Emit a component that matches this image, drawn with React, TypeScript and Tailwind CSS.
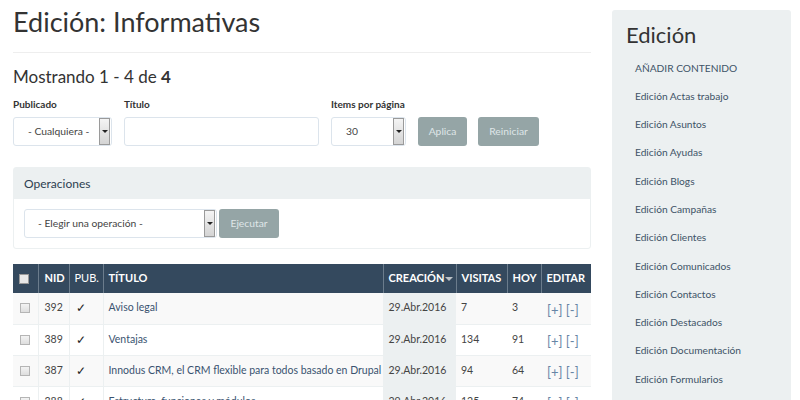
import React from "react";

const rows = [
  { nid: "392", title: "Aviso legal", date: "29.Abr.2016", visits: "7", today: "3" },
  { nid: "389", title: "Ventajas", date: "29.Abr.2016", visits: "134", today: "91" },
  { nid: "387", title: "Innodus CRM, el CRM flexible para todos basado en Drupal", date: "29.Abr.2016", visits: "94", today: "64" },
  { nid: "388", title: "Estructura, funciones y módulos", date: "29.Abr.2016", visits: "125", today: "74" },
];

const links = [
  "AÑADIR CONTENIDO",
  "Edición Actas trabajo",
  "Edición Asuntos",
  "Edición Ayudas",
  "Edición Blogs",
  "Edición Campañas",
  "Edición Clientes",
  "Edición Comunicados",
  "Edición Contactos",
  "Edición Destacados",
  "Edición Documentación",
  "Edición Formularios",
  "Edición Informativas",
];

function Arrow() {
  return (
    <span className="mr-px flex h-[27px] w-[11px] items-center justify-center border border-[#9a9a9a] bg-gradient-to-b from-[#f4f4f4] to-[#d4d4d4]">
      <span className="h-0 w-0 border-x-[3px] border-t-[3px] border-x-transparent border-t-[#222]" />
    </span>
  );
}

function Select({ value, width, pad }: { value: string; width: string; pad: string }) {
  return (
    <div className={`flex h-[29px] items-center justify-between rounded-[3px] border border-[#dce4ec] bg-white ${width}`}>
      <span className={`whitespace-nowrap text-[10.3px] text-[#444] ${pad}`}>{value}</span>
      <Arrow />
    </div>
  );
}

function Check() {
  return <span className="block h-[10px] w-[10px] border border-[#b5b5b5] bg-gradient-to-b from-[#f3f3f3] to-[#dedede]" />;
}

export default function App() {
  return (
    <div className="flex h-[400px] w-[800px] gap-[21px] overflow-hidden bg-white pl-[13px] pr-[9px] font-['Lato','Noto_Sans',sans-serif] text-[#2c3e50]">
      <main className="w-[578px] shrink-0">
        <h1 className="pt-[4px] text-[27px] leading-[36px] text-[#333]">Edición: Informativas</h1>
        <div className="mt-[12px] border-t border-[#eee]" />
        <h2 className="mt-[12px] text-[17px] leading-[24px] text-[#333]">
          Mostrando 1 - 4 de <b className="font-bold">4</b>
        </h2>

        <div className="mt-[8px] flex items-end">
          <div>
            <div className="mb-[5px] text-[10px] font-bold text-[#333]">Publicado</div>
            <Select value="- Cualquiera -" width="w-[99px]" pad="pl-[14px]" />
          </div>
          <div className="ml-[12px]">
            <div className="mb-[5px] text-[10px] font-bold text-[#333]">Título</div>
            <div className="h-[29px] w-[195px] rounded-[3px] border border-[#dce4ec] bg-white" />
          </div>
          <div className="ml-[12px]">
            <div className="mb-[5px] text-[10px] font-bold text-[#333]">Items por página</div>
            <Select value="30" width="w-[75px]" pad="pl-[14px]" />
          </div>
          <button className="ml-[12px] h-[29px] w-[49px] rounded-[3px] bg-[#95a5a6] text-[10.3px] text-[#dfe6e8]">Aplica</button>
          <button className="ml-[11px] h-[29px] w-[61px] rounded-[3px] bg-[#95a5a6] text-[10.3px] text-[#dfe6e8]">Reiniciar</button>
        </div>

        <section className="mt-[21px] rounded-[3px] border border-[#ecf0f1]">
          <div className="flex h-[31px] items-center bg-[#ecf0f1] px-[10px] text-[12px] text-[#2c3e50]">Operaciones</div>
          <div className="flex items-center px-[10px] pb-[10px] pt-[10px]">
            <Select value="- Elegir una operación -" width="w-[193px]" pad="pl-[13px]" />
            <button className="ml-[2px] h-[29px] w-[60px] rounded-[3px] bg-[#95a5a6] text-[10.3px] text-[#dfe6e8]">Ejecutar</button>
          </div>
        </section>

        <table className="mt-[15px] w-full border-collapse text-[11px]">
          <thead>
            <tr className="h-[29px] bg-[#34495e] text-left font-bold text-white">
              <th className="w-[25px] border-r border-[#6b7c8c] pl-[6px]"><span className="block h-[10px] w-[10px] border border-[#999] bg-[#e8e8e8]" /></th>
              <th className="w-[31px] border-r border-[#6b7c8c] pl-[6px]">NID</th>
              <th className="w-[34px] border-r border-[#6b7c8c] pl-[5px] font-normal">PUB.</th>
              <th className="w-[280px] border-r border-[#6b7c8c] pl-[5px]">TÍTULO</th>
              <th className="w-[73px] border-r border-[#6b7c8c] pl-[5px]">
                CREACIÓN<span className="ml-[1px] inline-block h-0 w-0 border-x-[4px] border-t-[4px] border-x-transparent border-t-[#bdc3c7] align-middle" />
              </th>
              <th className="w-[51px] border-r border-[#6b7c8c] pl-[5px]">VISITAS</th>
              <th className="w-[34px] border-r border-[#6b7c8c] pl-[5px]">HOY</th>
              <th className="pl-[5px]">EDITAR</th>
            </tr>
          </thead>
          <tbody>
            {rows.map((r, i) => (
              <tr key={r.nid} className={`h-[31px] border-b border-[#ecf0f1] ${i % 2 === 0 ? "bg-[#f9f9f9]" : "bg-white"} whitespace-nowrap text-[10.5px] text-[#444]`}>
                <td className="border-r border-[#ecf0f1] pl-[7px]"><Check /></td>
                <td className="border-r border-[#ecf0f1] pl-[6px]">{r.nid}</td>
                <td className="border-r border-[#ecf0f1] pl-[6px] text-[12px] text-[#222]">✓</td>
                <td className="border-r border-[#ecf0f1] pl-[5px] text-[#3a5370]">{r.title}</td>
                <td className="bg-[#ecf0f1] pl-[5px]">{r.date}</td>
                <td className="pl-[5px]">{r.visits}</td>
                <td className="pl-[5px]">{r.today}</td>
                <td className="pl-[6px] pt-[4px] text-[13px] text-[#6785a6]">[+] [-]</td>
              </tr>
            ))}
          </tbody>
        </table>
      </main>

      <aside className="mt-[10px] w-[179px] shrink-0 rounded-t-[3px] bg-[#ecf0f1] px-[14px]">
        <h3 className="pt-[12px] text-[22px] leading-[26px] text-[#333]">Edición</h3>
        <ul className="mt-[6px] pl-[9px]">
          {links.map((l) => (
            <li key={l} className="flex h-[28.3px] items-center whitespace-nowrap text-[10.2px] text-[#3e5367]">{l}</li>
          ))}
        </ul>
      </aside>
    </div>
  );
}
